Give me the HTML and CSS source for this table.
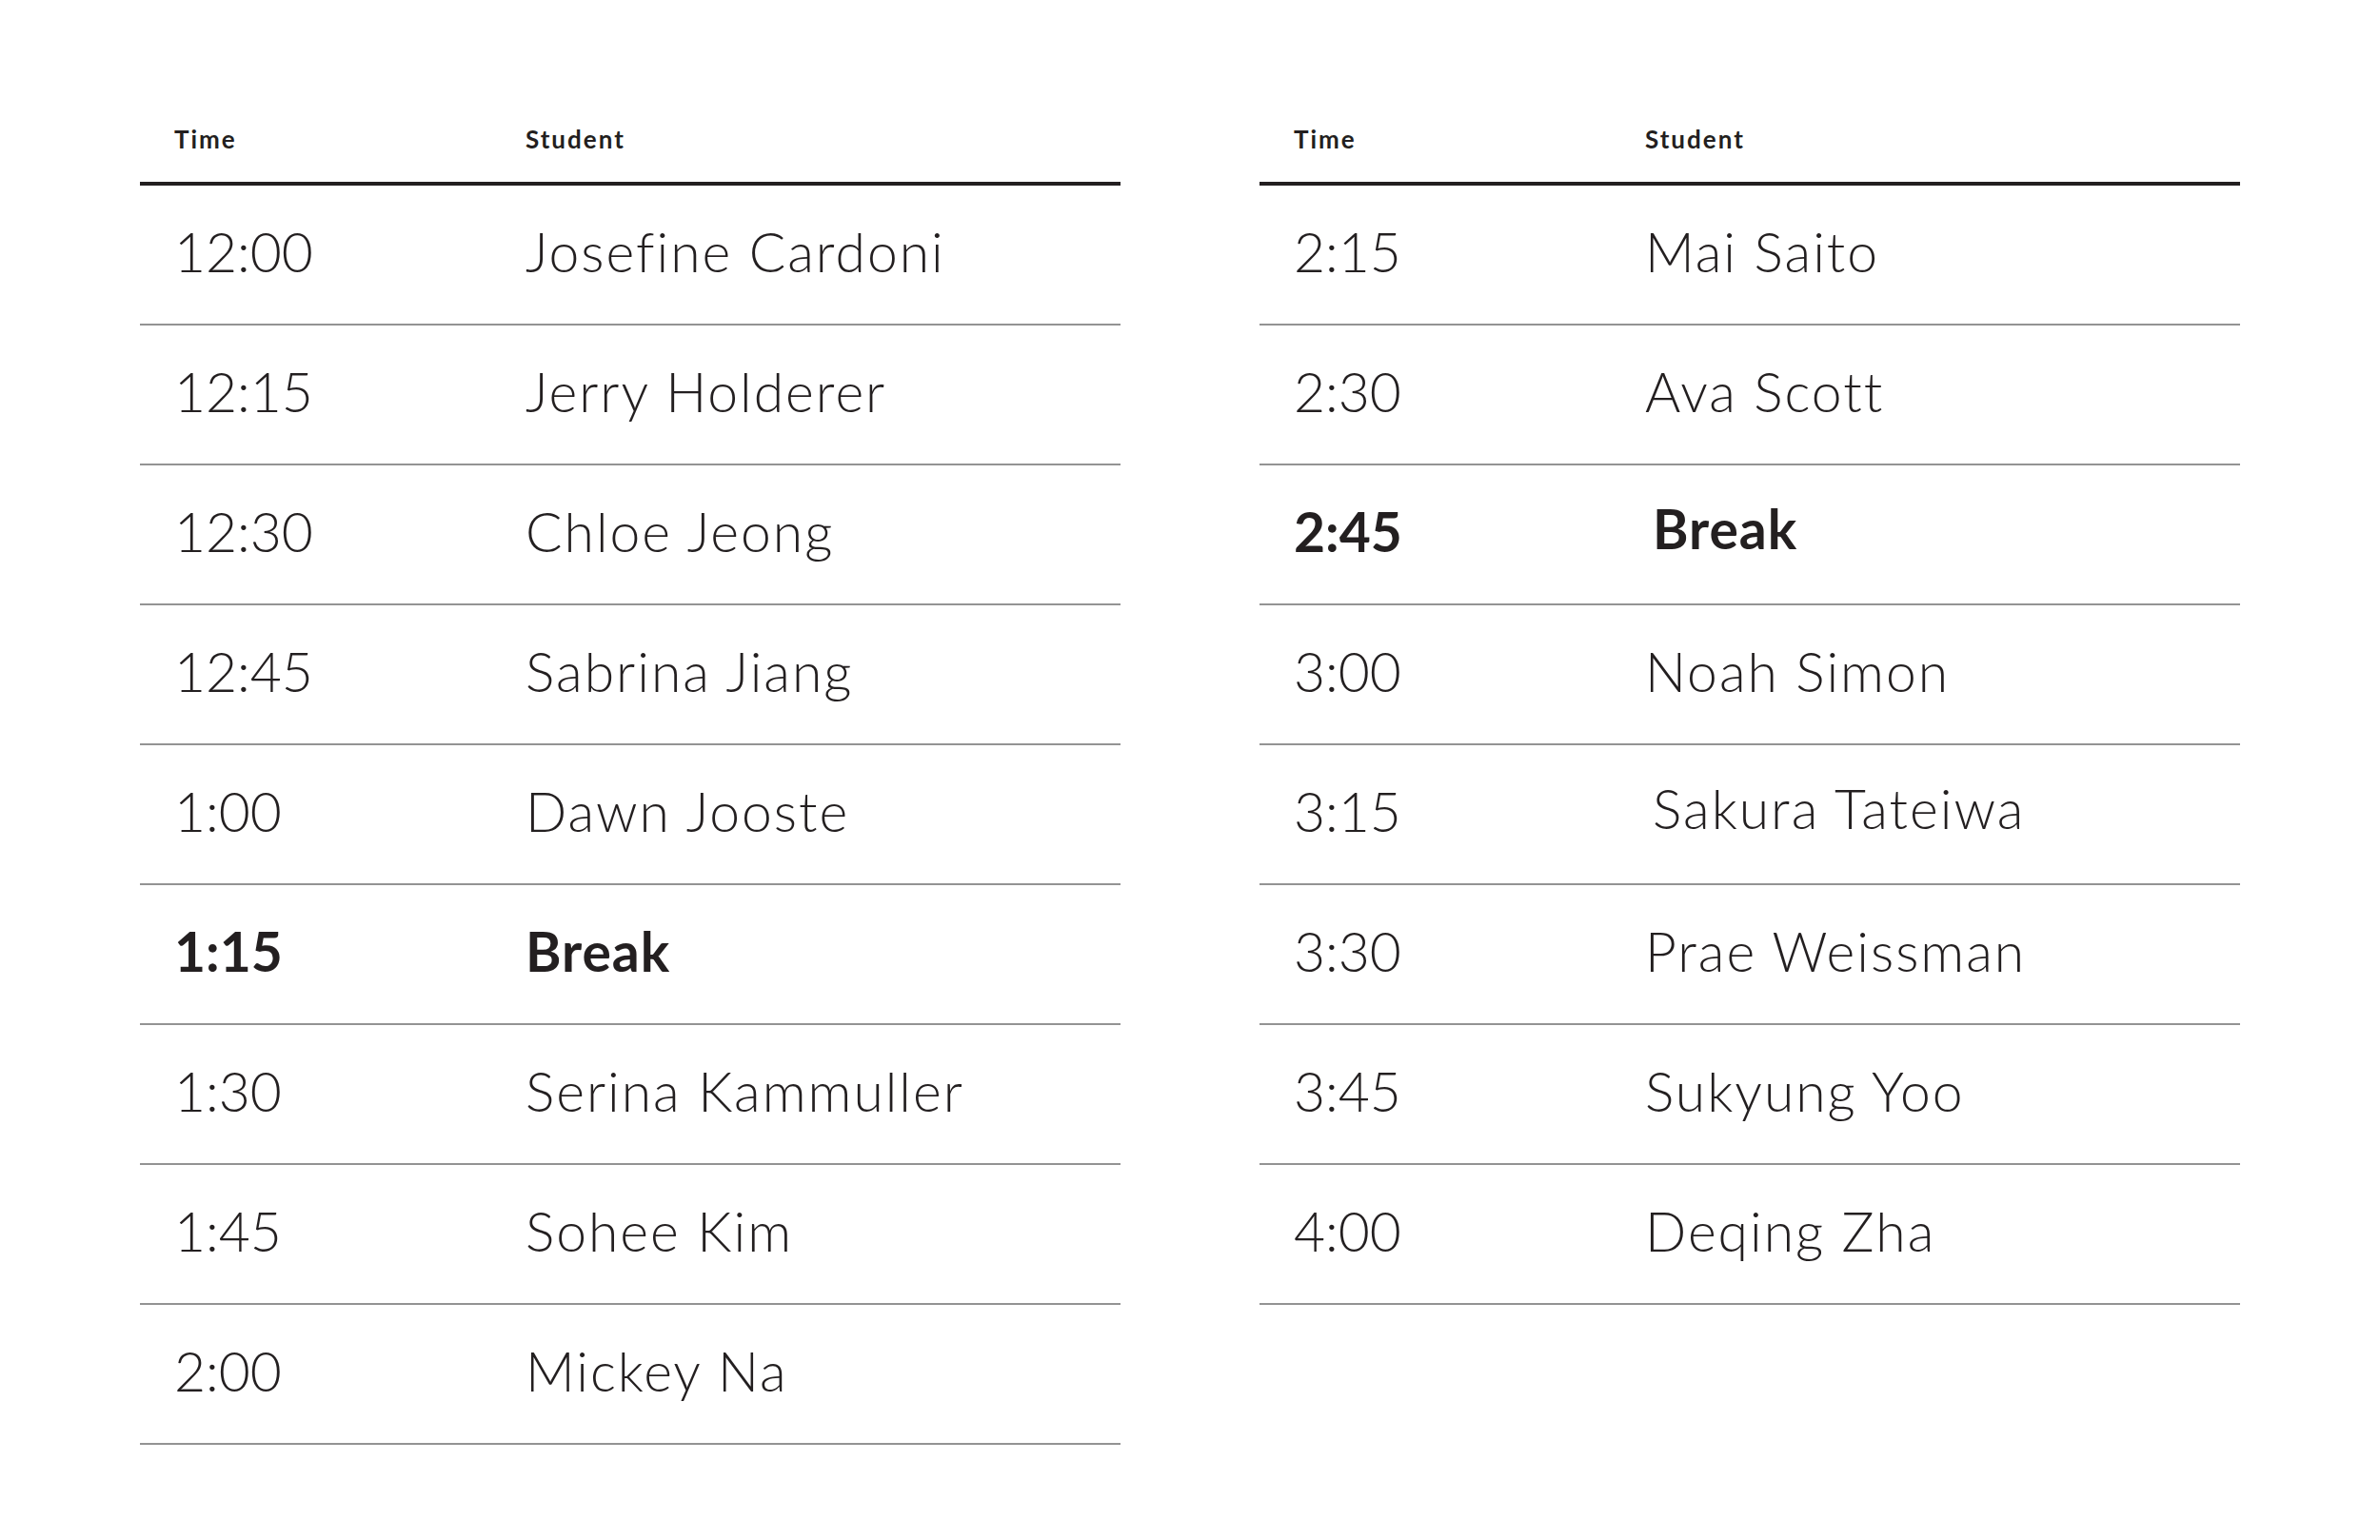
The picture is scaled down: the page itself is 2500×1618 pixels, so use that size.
FILE: index.html
```html
<!DOCTYPE html>
<html>
<head>
<meta charset="utf-8">
<link rel="stylesheet" href="styles.css">
</head>
<body>
<div class="page">
  <div class="sched">
    <div class="row head"><div class="c-time">Time</div><div class="c-name">Student</div></div>
    <div class="row"><div class="c-time">12:00</div><div class="c-name">Josefine Cardoni</div></div>
    <div class="row"><div class="c-time">12:15</div><div class="c-name">Jerry Holderer</div></div>
    <div class="row"><div class="c-time">12:30</div><div class="c-name">Chloe Jeong</div></div>
    <div class="row"><div class="c-time">12:45</div><div class="c-name">Sabrina Jiang</div></div>
    <div class="row"><div class="c-time">1:00</div><div class="c-name">Dawn Jooste</div></div>
    <div class="row brk"><div class="c-time">1:15</div><div class="c-name">Break</div></div>
    <div class="row"><div class="c-time">1:30</div><div class="c-name">Serina Kammuller</div></div>
    <div class="row"><div class="c-time">1:45</div><div class="c-name">Sohee Kim</div></div>
    <div class="row"><div class="c-time">2:00</div><div class="c-name">Mickey Na</div></div>
  </div>
  <div class="sched">
    <div class="row head"><div class="c-time">Time</div><div class="c-name">Student</div></div>
    <div class="row"><div class="c-time">2:15</div><div class="c-name">Mai Saito</div></div>
    <div class="row"><div class="c-time">2:30</div><div class="c-name">Ava Scott</div></div>
    <div class="row brk"><div class="c-time">2:45</div><div class="c-name shifted">Break</div></div>
    <div class="row"><div class="c-time">3:00</div><div class="c-name">Noah Simon</div></div>
    <div class="row"><div class="c-time">3:15</div><div class="c-name shifted">Sakura Tateiwa</div></div>
    <div class="row"><div class="c-time">3:30</div><div class="c-name">Prae Weissman</div></div>
    <div class="row"><div class="c-time">3:45</div><div class="c-name">Sukyung Yoo</div></div>
    <div class="row"><div class="c-time">4:00</div><div class="c-name">Deqing Zha</div></div>
  </div>
</div>
</body>
</html>
```
FILE: styles.css
```css
html, body {
  margin: 0;
  padding: 0;
  background: #ffffff;
}
body {
  font-family: "Lato", "Noto Sans", sans-serif;
  color: #231f20;
}
.page {
  display: flex;
  align-items: flex-start;
  gap: 146px;
  padding: 126px 0 0 147px;
}
.sched {
  width: 1030px;
  display: flex;
  flex-direction: column;
}
.row {
  display: grid;
  grid-template-columns: 405px 1fr;
  height: 138px;
  padding-bottom: 7px;
  border-bottom: 2px solid #939393;
  font-size: 57px;
  font-weight: 300;
  line-height: 138px;
  box-sizing: content-box;
}
.row .c-name {
  letter-spacing: 2px;
}
.row.head {
  height: 40px;
  line-height: 40px;
  font-size: 26px;
  font-weight: 700;
  padding-bottom: 25px;
  border-bottom: 4px solid #231f20;
}
.row.head .c-time,
.row.head .c-name {
  letter-spacing: 2px;
}
.c-time {
  padding-left: 36px;
  white-space: nowrap;
}
.c-name {
  white-space: nowrap;
}
.brk {
  font-weight: 700;
}
.brk .c-name {
  letter-spacing: 1px;
}
.c-name.shifted {
  padding-left: 8px;
  line-height: 132px;
}
```
